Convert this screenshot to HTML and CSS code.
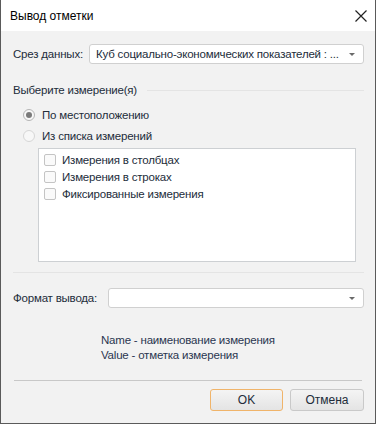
FILE: index.html
```html
<!DOCTYPE html>
<html lang="ru">
<head>
  <meta charset="UTF-8" />
  <title>Вывод отметки</title>
  <link rel="stylesheet" href="styles.css">
</head>
<body>
  <div class="window">
    <div class="titlebar">
      <span class="title">Вывод отметки</span>
      <svg class="close" width="12" height="12" viewBox="0 0 12 12">
        <path d="M0.5 0.5 L11.5 11.5 M11.5 0.5 L0.5 11.5" stroke="#222" stroke-width="1.2" fill="none"/>
      </svg>
    </div>

    <div class="content">
      <div class="field-row slice-row">
        <span class="label">Срез данных:</span>
        <div class="combo">
          <span class="combo-text">Куб социально-экономических показателей : ...</span>
          <span class="arrow"></span>
        </div>
      </div>

      <div class="group-title">
        <span>Выберите измерение(я)</span>
        <div class="group-line"></div>
      </div>

      <div class="radio-list">
        <div class="radio-row">
          <span class="radio checked"></span>
          <span>По местоположению</span>
        </div>
        <div class="radio-row">
          <span class="radio faded"></span>
          <span>Из списка измерений</span>
        </div>
      </div>

      <div class="listbox">
        <div class="check-row"><span class="checkbox"></span>Измерения в столбцах</div>
        <div class="check-row"><span class="checkbox"></span>Измерения в строках</div>
        <div class="check-row"><span class="checkbox"></span>Фиксированные измерения</div>
      </div>

      <div class="separator"></div>

      <div class="field-row format-row">
        <span class="label">Формат вывода:</span>
        <div class="combo">
          <span class="combo-text"></span>
          <span class="arrow"></span>
        </div>
      </div>

      <div class="hint">
        <div>Name - наименование измерения</div>
        <div>Value - отметка измерения</div>
      </div>

      <div class="separator bottom-sep"></div>

      <div class="buttons">
        <button class="btn btn-ok">OK</button>
        <button class="btn">Отмена</button>
      </div>
    </div>
  </div>
</body>
</html>
```

FILE: styles.css
```css
html, body {
  margin: 0;
  padding: 0;
}

body {
  font-family: "Liberation Sans", Arial, sans-serif;
  font-size: 11.5px;
  letter-spacing: -0.2px;
  color: #222c3a;
}

.window {
  box-sizing: border-box;
  width: 376px;
  height: 424px;
  border: 1px solid #5a5a5a;
  border-top: none;
  background-color: #f2f2f2;
}

.titlebar {
  height: 31px;
  background-color: #fff;
  display: flex;
  align-items: center;
  justify-content: space-between;
  padding: 0 8px 0 9px;
}

.title {
  font-size: 12px;
  letter-spacing: 0;
  color: #000;
}

.content {
  padding: 0 11px 0 12px;
}

.field-row {
  display: flex;
  align-items: center;
}

.label {
  white-space: nowrap;
  flex-shrink: 0;
}

.slice-row {
  margin-top: 13px;
}

.slice-row .label {
  width: 76px;
}

.format-row {
  margin-top: 15px;
}

.format-row .label {
  width: 95px;
}

.combo {
  flex: 1;
  box-sizing: border-box;
  height: 20px;
  background-color: #fff;
  border: 1px solid #d0d0d0;
  border-radius: 3px;
  display: flex;
  align-items: center;
  padding: 0 6px;
}

.combo-text {
  flex: 1;
  white-space: nowrap;
  overflow: hidden;
}

.arrow {
  width: 0;
  height: 0;
  border-left: 3px solid transparent;
  border-right: 3px solid transparent;
  border-top: 3px solid #6a6a6a;
  margin: 1px 2px 0 8px;
}

.group-title {
  display: flex;
  align-items: center;
  margin-top: 18px;
  height: 16px;
}

.group-line {
  flex: 1;
  height: 1px;
  background-color: #e4e4e4;
  margin-left: 10px;
}

.radio-list {
  margin-top: 6px;
}

.radio-row {
  display: flex;
  align-items: center;
  height: 21px;
  padding-left: 10px;
}

.radio {
  box-sizing: border-box;
  width: 12px;
  height: 12px;
  border-radius: 50%;
  border: 1px solid #b5b5b5;
  background-color: #f7f7f7;
  margin-right: 7px;
  display: flex;
  align-items: center;
  justify-content: center;
}

.radio.checked::after {
  content: "";
  width: 6px;
  height: 6px;
  border-radius: 50%;
  background-color: #7a7a7a;
}

.radio.faded {
  border-color: #d6d6d6;
}

.listbox {
  box-sizing: border-box;
  height: 114px;
  margin: 2px 8px 0 25px;
  background-color: #fff;
  border: 1px solid #cdd0d3;
  padding: 2px 5px;
}

.check-row {
  display: flex;
  align-items: center;
  height: 17px;
}

.checkbox {
  box-sizing: border-box;
  width: 12px;
  height: 12px;
  border: 1px solid #c4c4c4;
  border-radius: 2px;
  background-color: #fafafa;
  margin-right: 6px;
}

.separator {
  height: 1px;
  background-color: #e4e4e4;
  margin-top: 10px;
}

.hint {
  margin-top: 25px;
  padding-left: 88px;
  line-height: 15px;
  color: #2a3650;
}

.bottom-sep {
  margin: 17px 2px 0 1px;
  background-color: #c8c8c8;
}

.buttons {
  display: flex;
  justify-content: flex-end;
  gap: 7px;
  margin-top: 8px;
}

.btn {
  box-sizing: border-box;
  width: 74px;
  height: 22px;
  font-family: inherit;
  font-size: 12px;
  color: #222c3a;
  background: linear-gradient(#f4f4f4, #e4e4e4);
  border: 1px solid #c9c9c9;
  border-radius: 3px;
  padding: 0;
}

.btn-ok {
  width: 73px;
  border-color: #f0b46a;
}
```
